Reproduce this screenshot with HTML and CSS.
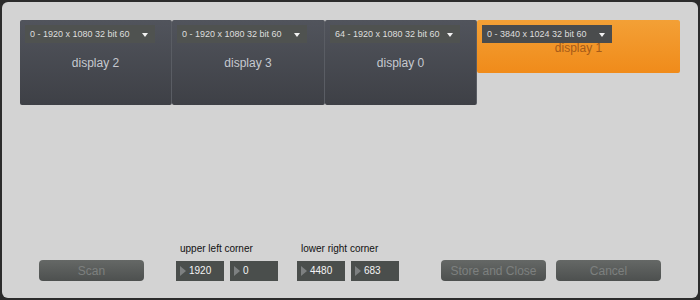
FILE: index.html
```html
<!DOCTYPE html>
<html>
<head>
    <title>Display Setup</title>
    <link rel="stylesheet" href="styles.css">
</head>
<body>

<div class="panel">
    <div class="cards">
        <div class="card">
            <div class="mode">0 - 1920 x 1080 32 bit 60<span class="arrow"></span></div>
            <div class="name">display 2</div>
        </div>
        <div class="card wide">
            <div class="mode">0 - 1920 x 1080 32 bit 60<span class="arrow"></span></div>
            <div class="name">display 3</div>
        </div>
        <div class="card">
            <div class="mode">64 - 1920 x 1080 32 bit 60<span class="arrow"></span></div>
            <div class="name">display 0</div>
        </div>
        <div class="card active">
            <div class="mode">0 - 3840 x 1024 32 bit 60<span class="arrow"></span></div>
            <div class="name">display 1</div>
        </div>
    </div>

    <!-- Bottom controls -->
    <div class="controls">
        <button class="btn scan">Scan</button>
        <div class="corner first">
            <label>upper left corner</label>
            <div class="fields">
                <div class="num"><span class="tri"></span>1920</div>
                <div class="num"><span class="tri"></span>0</div>
            </div>
        </div>
        <div class="corner">
            <label>lower right corner</label>
            <div class="fields">
                <div class="num"><span class="tri"></span>4480</div>
                <div class="num"><span class="tri"></span>683</div>
            </div>
        </div>
        <button class="btn store">Store and Close</button>
        <button class="btn cancel">Cancel</button>
    </div>
</div>

</body>
</html>
```

FILE: styles.css
```css
body {
    margin: 0;
    background-color: #2b2b2b;
    font-family: "Liberation Sans", Arial, sans-serif;
}
.panel {
    margin: 2px;
    height: 296px;
    box-sizing: border-box;
    background-color: #d3d3d3;
    border-radius: 6px;
    display: flex;
    flex-direction: column;
}
.cards {
    display: flex;
    align-items: flex-start;
    padding: 18px 0 0 18px;
}
.card {
    width: 152px;
    height: 85px;
    box-sizing: border-box;
    padding: 5px;
    border-radius: 2px;
    border-right: 1px solid #5a5d64;
    background: linear-gradient(#51545c, #3e4046);
}
.card.wide {
    width: 153px;
}
.card.active {
    width: 203px;
    height: 53px;
    border-right: none;
    background: linear-gradient(#f3a036, #f08b1a);
}
.mode {
    width: 130px;
    height: 18px;
    box-sizing: border-box;
    padding-left: 5px;
    background-color: #4f5250;
    color: #dedede;
    font-size: 9px;
    line-height: 18px;
    position: relative;
}
.active .mode {
    background-color: #4a4c4d;
}
.arrow {
    position: absolute;
    right: 7px;
    top: 8px;
    border-left: 3px solid transparent;
    border-right: 3px solid transparent;
    border-top: 4px solid #f2f2f2;
}
.name {
    text-align: center;
    color: #c6c9d0;
    font-size: 12px;
    margin-top: 13px;
}
.active .name {
    color: #a65b18;
    margin-top: -2px;
}
/* Bottom row */
.controls {
    margin-top: auto;
    display: flex;
    align-items: flex-end;
    padding: 0 0 17px 37px;
}
.btn {
    width: 105px;
    height: 21px;
    padding: 0;
    border: none;
    border-radius: 4px;
    background: linear-gradient(#656866, #4d504f);
    color: #7d807f;
    font-family: "Liberation Sans", Arial, sans-serif;
    font-size: 12px;
}
.corner {
    margin-left: 19px;
}
.corner.first {
    margin-left: 32px;
}
.corner label {
    display: block;
    font-size: 10px;
    line-height: 12px;
    padding-left: 4px;
    margin-bottom: 6px;
    color: #111;
}
.fields {
    display: flex;
    gap: 6px;
}
.num {
    width: 48px;
    height: 20px;
    box-sizing: border-box;
    background-color: #4a4e4c;
    color: #f4f4f4;
    font-size: 10px;
    line-height: 20px;
    display: flex;
    align-items: center;
    padding-left: 4px;
}
.tri {
    border-top: 5px solid transparent;
    border-bottom: 5px solid transparent;
    border-left: 6px solid #7d8081;
    margin-right: 3px;
}
.store {
    margin-left: 42px;
}
.cancel {
    margin-left: 10px;
}
```
